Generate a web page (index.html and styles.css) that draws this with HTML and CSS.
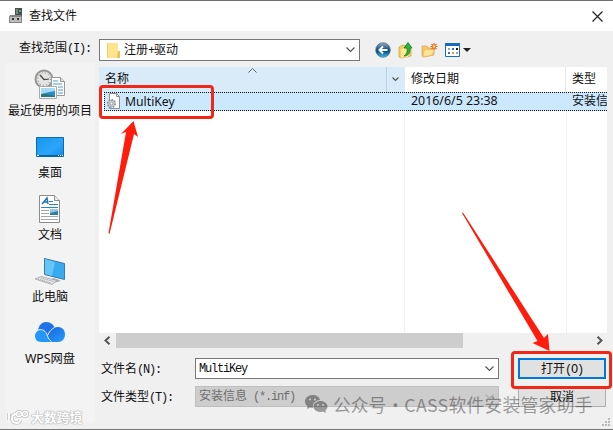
FILE: index.html
```html
<!DOCTYPE html>
<html lang="zh-CN">
<head>
    <meta charset="UTF-8">
    <title>查找文件</title>
    <link rel="stylesheet" href="styles.css">
</head>
<body>
<div class="dialog">
    <div class="titlebar">
        <svg class="app-icon" width="14" height="16" viewBox="0 0 14 16">
            <path d="M6 0h7v9H6z" fill="#46504f"/>
            <path d="M7 1h2v5H7z" fill="#738482"/>
            <path d="M10 2h2v2h-2z" fill="#35bd54"/>
            <path d="M1 7h11l1 2v6H0V9z" fill="#858585"/>
            <path d="M1 9h11v5H1z" fill="#bdbdbd"/>
            <path d="M3 10h2v2H3zM8 10h2v2H8z" fill="#333"/>
        </svg>
        <span class="title">查找文件</span>
        <svg class="close" width="11" height="11" viewBox="0 0 11 11"><path d="M.5.5l10 10M10.5.5l-10 10" stroke="#222" stroke-width="1.2"/></svg>
    </div>
    <div class="body">
        <div class="left">
            <div class="look-label">查找范围<span class="mono">(I):</span></div>
            <div class="places">
                <div class="place">
                    <svg width="32" height="32" viewBox="0 0 32 32">
                        <circle cx="10" cy="10" r="8.5" fill="#e4e4e2" stroke="#969696" stroke-width="2"/>
                        <circle cx="10" cy="10" r="6.3" fill="none" stroke="#777" stroke-dasharray="1 2.3"/>
                        <path d="M6 6l4 4.5 5-.5" fill="none" stroke="#444" stroke-width="1.2"/>
                        <path d="M17.5 8.5h9l4 4v14h-13z" fill="#fff" stroke="#999"/>
                        <path d="M26.5 8.5v4h4" fill="#ddd" stroke="#999"/>
                        <path d="M19 12h5M19 15h9M24 18h5M24 21h5M24 24h5" stroke="#4b9bd0"/>
                        <path d="M5.5 17.5h17v12h-17z" fill="#fff" stroke="#aaa"/>
                        <path d="M7 19h14v9H7z" fill="#2889cd"/>
                        <path d="M7 19h14v3q-6 1-14 3z" fill="#a5dcf4"/>
                        <path d="M7 25q7 0 14 2v1H7z" fill="#277b68"/>
                    </svg>
                    <span>最近使用的项目</span>
                </div>
                <div class="place">
                    <svg width="32" height="32" viewBox="0 0 32 32">
                        <defs><linearGradient id="desk" x2="1" y2="1"><stop offset="0" stop-color="#1696ec"/><stop offset=".6" stop-color="#2ba5fa"/><stop offset="1" stop-color="#118eea"/></linearGradient></defs>
                        <path d="M2.5 6.5h27v19h-27z" fill="url(#desk)" stroke="#0a6bad"/>
                        <path d="M3 24h26v1.5H3z" fill="#08609f"/>
                        <path d="M3 24.5h2M24 24.5h1M26 24.5h1M28 24.5h1" stroke="#fff"/>
                    </svg>
                    <span>桌面</span>
                </div>
                <div class="place">
                    <svg width="32" height="32" viewBox="0 0 32 32">
                        <path d="M5.500 2.500h15l5 5v22h-20z" fill="#fff" stroke="#8c8c8c"/>
                        <path d="M20.500 2.500v5h5" fill="#eee" stroke="#8c8c8c"/>
                        <path d="M8 11l5-6 1 6M10 9h4" fill="none" stroke="#1c78b4" stroke-width="1.5"/>
                        <path d="M15 8.500h4M15 11.500h9M7 14.500h17" stroke="#2c86c0"/>
                        <path d="M7 17.500h8M7 20.500h8M7 23.500h17M7 26.500h17" stroke="#a0a6aa"/>
                        <path d="M16 16h8v6h-8z" fill="#2d7fa9"/>
                        <path d="M16 16h8v2l-8 2z" fill="#91cbe8"/>
                    </svg>
                    <span>文档</span>
                </div>
                <div class="place">
                    <svg width="32" height="32" viewBox="0 0 32 32">
                        <path d="M10.500 3.500l20 5v16l-20-5z" fill="#38aaf0" stroke="#397ca6"/>
                        <path d="M11 4l10 3-3 14-7-2z" fill="#66c4f9"/>
                        <path d="M19 23l5 1.500 3 1.500-6 1.500-4-2z" fill="#a7adb1"/>
                        <path d="M1 24l6-2.500 16 4-5 4z" fill="#e5e5e5" stroke="#a4a4a4" stroke-width=".8"/>
                        <path d="M4 24l13 4M7 23l13 3.500" stroke="#999" stroke-dasharray="1 1"/>
                    </svg>
                    <span>此电脑</span>
                </div>
                <div class="place">
                    <svg width="32" height="32" viewBox="0 0 32 32">
                        <defs><linearGradient id="cloud" x2="1" y2="1"><stop offset="0" stop-color="#1762df"/><stop offset="1" stop-color="#269eff"/></linearGradient></defs>
                        <path d="M4 13C5 8 8 5 12 5c5 0 8 3 9 7l-7 8z" fill="#1f72ea"/>
                        <path d="M12 25c2-7 6-15 12-15 4 0 7 3 7 7.500 0 4.500-3 7.500-7 7.500z" fill="url(#cloud)"/>
                        <path d="M17 25H7c-4 0-6-3-6-6s2.500-6.500 6.500-6.500C13 12.500 12 22 17 25z" fill="#2497fc"/>
                        <path d="M2 14.500c2-2 6-3 9 0s2 7 6.500 10M13.500 18.500c2-4 4-6.500 7-8" fill="none" stroke="#f3f3f3"/>
                    </svg>
                    <span class="wps">WPS网盘</span>
                </div>
            </div>
        </div>
        <div class="right">
            <div class="toolbar">
                <div class="combo">
                    <svg width="14" height="17" viewBox="0 0 14 17"><path d="M0 1h11v15H0z" fill="#ffe38d"/><path d="M11 9h2v7h-3z" fill="#e7c15b"/><path d="M0 1h1v15H0z" fill="#f2ce6d"/></svg>
                    <span>注册<span class="mono">+</span>驱动</span>
                    <svg class="chevron" width="9" height="6" viewBox="0 0 9 6"><path d="M.5.5l4 4 4-4"/></svg>
                </div>
                <svg class="back" width="16" height="16" viewBox="0 0 16 16">
                    <defs><linearGradient id="orb" x2="0" y2="1"><stop offset="0" stop-color="#9ba9b5"/><stop offset=".45" stop-color="#195889"/><stop offset=".6" stop-color="#08517f"/><stop offset="1" stop-color="#42c2ec"/></linearGradient></defs>
                    <circle cx="8" cy="8" r="7.3" fill="url(#orb)" stroke="#466d8e" stroke-width=".7"/>
                    <path d="M12.500 8H4.500M8 4.500L4.500 8 8 11.500" fill="none" stroke="#fff" stroke-width="2"/>
                </svg>
                <svg class="up" width="16" height="17" viewBox="0 0 16 17">
                    <path d="M1 5l4-2 2 1 6 1v9l-9 2-3-1z" fill="#f4cf62" stroke="#cba03d" stroke-width=".7"/>
                    <path d="M3 7l9-1-2 9-7 1z" fill="#ffe79a"/>
                    <path d="M6 14c3-2 3.500-5 3-8H6l4-5.500L14 6h-2c.5 5-2 8-6 8z" fill="#2fb534" stroke="#13791f" stroke-width=".8"/>
                </svg>
                <svg class="new" width="17" height="16" viewBox="0 0 17 16">
                    <path d="M1 4h5l1 2h6v7l-10 2-2-1z" fill="#f5c95f" stroke="#d5a44c" stroke-width=".7"/>
                    <path d="M3 8l11-1-3 6-9 2z" fill="#ffe59b" stroke="#dfb35d" stroke-width=".6"/>
                    <path d="M13 1v7M9.500 4.500h7M10.500 2l5 5M15.500 2l-5 5" stroke="#ed6a30" stroke-width="1.2"/>
                    <circle cx="13" cy="4.500" r="1.2" fill="#ffe261"/>
                </svg>
                <svg class="views" width="27" height="15" viewBox="0 0 27 15">
                    <path d="M.5.5h14v13H.5z" fill="#fff" stroke="#176bc1"/>
                    <path d="M0 0h15v3H0z" fill="#176bc1"/>
                    <path d="M3 5h2v2H3zM11 9h2v2h-2z" fill="#89a7c0"/>
                    <path d="M7 5h2v2H7zM3 9h2v2H3z" fill="#3274b5"/>
                    <path d="M11 5h2v2h-2z" fill="#222"/><path d="M7 9h2v2H7z" fill="#d4904f"/>
                    <path d="M18 5h8l-4 4z" fill="#222"/>
                </svg>
            </div>
            <div class="list">
                <div class="head">
                    <div class="name-col">名称
                        <svg class="sort" width="9" height="5" viewBox="0 0 9 5"><path d="M.5 4.500l4-4 4 4"/></svg>
                    </div>
                    <div class="drop"><svg class="chevron" width="7" height="5" viewBox="0 0 7 5"><path d="M.5.5l3 3 3-3"/></svg></div>
                    <div class="date-col">修改日期</div>
                    <div class="type-col">类型</div>
                </div>
                <div class="row">
                    <div class="file">
                        <svg width="15" height="17" viewBox="0 0 15 17">
                            <path d="M3.500.5h7l3 3v12h-10z" fill="#fff" stroke="#909090"/>
                            <path d="M10.500.5v3h3" fill="none" stroke="#909090"/>
                            <circle cx="5.500" cy="10.500" r="3.800" fill="#c6cbd0" stroke="#858c92" stroke-width="1.5" stroke-dasharray="1.700 1.200"/>
                            <circle cx="5.500" cy="10.500" r="1.400" fill="#fff" stroke="#858c92" stroke-width=".7"/>
                        </svg>
                        <span>MultiKey</span>
                    </div>
                    <div class="date-col">2016/6/5 23:38</div>
                    <div class="type-col">安装信息</div>
                </div>
                <div class="blank"><i></i><i></i><i></i></div>
            </div>
            <div class="scrollbar">
                <svg width="7" height="9" viewBox="0 0 7 9"><path d="M5.500.8l-4 3.700 4 3.700"/></svg>
                <div class="track"><div class="thumb"></div></div>
                <svg width="7" height="9" viewBox="0 0 7 9"><path d="M1.500.8l4 3.700-4 3.700"/></svg>
            </div>
            <div class="form">
                <label>文件名<span class="mono">(N):</span></label>
                <div class="field"><span class="mono">MultiKey</span><svg class="chevron" width="9" height="6" viewBox="0 0 9 6"><path d="M.5.5l4 4 4-4"/></svg></div>
                <div class="button primary">打开<span class="mono">(O)</span></div>
                <label>文件类型<span class="mono">(T):</span></label>
                <div class="field disabled"><span>安装信息<span class="mono"> (*.inf)</span></span><svg class="chevron" width="9" height="6" viewBox="0 0 9 6"><path d="M.5.5l4 4 4-4"/></svg></div>
                <div class="button">取消</div>
            </div>
        </div>
    </div>
    <svg class="grip" width="9" height="9" viewBox="0 0 9 9"><path d="M6 0h2v2H6zM3 3h2v2H3zM6 3h2v2H6zM0 6h2v2H0zM3 6h2v2H3zM6 6h2v2H6z" fill="#b9b9b9"/></svg>

    <div class="account">
        <svg width="24" height="20" viewBox="0 0 24 20">
            <path fill-rule="evenodd" d="M8.500 1C4 1 1 4 1 7.500c0 2 1 3.500 2.500 4.800L3 15l3-1.500 3 .5C8 9 12 6 16 6c-.6-3-3.500-5-7.500-5zM5 5.500a1 1 0 1 0 2 0a1 1 0 1 0-2 0M10 5.500a1 1 0 1 0 2 0a1 1 0 1 0-2 0"/>
            <path fill-rule="evenodd" d="M16.500 7C12.500 7 9.500 9.500 9.500 12.500s3 5.500 7 5.500l2.500-.4L22 19l-.7-2.400c1.300-1 2.200-2.400 2.200-4.100 0-3-3-5.500-7-5.500zM13 11a1 1 0 1 0 2 0a1 1 0 1 0-2 0M18 11a1 1 0 1 0 2 0a1 1 0 1 0-2 0"/>
        </svg>
        <span class="account-label">公众号</span><span class="dot">·</span><span class="account-name">CASS软件安装管家助手</span>
    </div>
    <div class="brand">
        <svg width="24" height="15" viewBox="0 0 24 15">
            <path d="M2 3v7M10 4Q5 4 5 8.500T9.500 13q3 0 4-3" stroke="#c4c4c4" stroke-width="3.5"/>
            <circle cx="12" cy="4" r="2.500" stroke="#c4c4c4" stroke-width="3"/>
            <circle cx="18" cy="4" r="2.500" stroke="#c4c4c4" stroke-width="3"/>
            <path d="M2 3v7M10 4Q5 4 5 8.500T9.500 13q3 0 4-3" stroke="#fff" stroke-width="1.8"/>
            <circle cx="12" cy="4" r="2.500" stroke="#fff" stroke-width="1.3"/>
            <circle cx="18" cy="4" r="2.500" stroke="#fff" stroke-width="1.3"/>
        </svg>
        <span>大数跨境</span>
    </div>
    <div class="file-frame"></div>
    <div class="open-frame"></div>
    <svg class="arrows" width="613" height="430" viewBox="0 0 613 430">
        <path d="M133.500 121l4.500 16-4-3L109.500 234l-1-1L126 132l-5 2z"/>
        <path d="M462 213l1-.5L544 338l4-4 1.500 17-17-8 5-2z"/>
    </svg>
</div>
</body>
</html>
```
FILE: styles.css
```css
* {
    box-sizing: border-box;
}

body {
    margin: 0;
    font-family: "Noto Sans", "Noto Sans CJK SC", sans-serif;
    font-size: 12px;
    line-height: 16px;
    color: #111;
}

svg {
    display: block;
    flex: none;
}

.mono {
    font-family: "Liberation Mono", monospace;
    font-size: 12px;
    letter-spacing: -1.2px;
    white-space: pre;
}

.dialog {
    position: relative;
    width: 613px;
    height: 430px;
    overflow: hidden;
    background: #f0f0f0;
    border-top: 1px solid #706e71;
    border-bottom: 1px solid #777;
}

.titlebar {
    display: flex;
    align-items: center;
    height: 30px;
    padding: 0 10px 0 9px;
    background: #fff;
}

.title {
    margin-left: 6px;
}

.close {
    margin-left: auto;
}

.body {
    display: grid;
    grid-template-columns: 99px 1fr;
}

.look-label {
    height: 32px;
    padding: 9px 0 0 19px;
    white-space: nowrap;
}

.places {
    height: 360px;
    margin: 0 4px 0 6px;
    background: #f3f3f3;
}

.place {
    display: flex;
    flex-direction: column;
    align-items: center;
    height: 62px;
    padding: 6px 1px 0 0;
    gap: 2px;
    white-space: nowrap;
}

.wps {
    font-size: 12.3px;
}

.toolbar {
    display: flex;
    height: 36px;
    padding-top: 8px;
}

.combo {
    display: flex;
    align-items: center;
    width: 261px;
    height: 22px;
    padding: 0 4px 0 7px;
    gap: 3px;
    background: #fff;
    border: 1px solid #777;
}

.chevron {
    margin-left: auto;
    fill: none;
    stroke: #555;
    stroke-width: 1.2;
}

.back {
    margin: 3px 0 0 15px;
}

.up {
    margin: 3px 0 0 7px;
}

.new {
    margin: 3px 0 0 7px;
}

.views {
    margin: 4px 0 0 7px;
}

.list {
    display: flex;
    flex-direction: column;
    width: 508px;
    height: 266px;
    overflow: hidden;
    background: #fff;
}

.head {
    display: grid;
    grid-template-columns: 288px 18px 161px 41px;
    height: 25px;
    line-height: 24px;
}

.name-col {
    display: flex;
    padding-left: 6px;
    background: #d9ebf9;
    border-right: 1px solid #b9d3e7;
}

.sort {
    margin: 1px 0 0 119px;
    fill: none;
    stroke: #666;
}

.drop {
    display: flex;
    align-items: center;
    padding: 0 6px 0 5px;
    background: #d9ebf9;
}

.date-col,
.type-col {
    padding-left: 6px;
    white-space: nowrap;
    overflow: hidden;
}

.head .date-col {
    border-right: 1px solid #deebf4;
}

.row {
    display: grid;
    grid-template-columns: 301px 161px 41px;
    height: 19px;
    margin-left: 5px;
    line-height: 16px;
    background: #cce8ff;
    border: 1px dotted #111;
    border-right: none;
}

.file {
    display: flex;
    align-items: center;
    padding-left: 1px;
    gap: 4px;
    font-size: 12.2px;
}

.row .date-col {
    padding-left: 5px;
    font-size: 12.4px;
}

.row .type-col {
    padding-left: 5px;
}

.blank {
    flex: 1;
    display: grid;
    grid-template-columns: 306px 162px 40px;
}

.blank i {
    border-right: 1px solid #edf3f8;
}

.blank i:last-child {
    border: none;
}

.scrollbar {
    display: flex;
    align-items: center;
    width: 508px;
    height: 15px;
    padding: 0 4px 0 5px;
}

.scrollbar > svg {
    fill: none;
    stroke: #555;
    stroke-width: 2;
}

.track {
    flex: 1;
    height: 15px;
    padding-left: 5px;
}

.thumb {
    width: 347px;
    height: 15px;
    background: #cdcdcd;
}

.form {
    display: grid;
    grid-template-columns: 96px 304px 107px;
    grid-template-rows: 21px 21px;
    row-gap: 7px;
    padding-top: 10px;
}

.form label {
    padding: 3px 0 0 2px;
    white-space: nowrap;
}

.field {
    display: flex;
    align-items: center;
    padding: 0 4px 0 3px;
    background: #fff;
    border: 1px solid #777;
}

.disabled {
    color: #6d6d6d;
    background: #cdcdcd;
    border-color: #bfbfbf;
}

.disabled .chevron {
    stroke: #aaa;
}

.button {
    width: 88px;
    margin-left: 19px;
    line-height: 19px;
    text-align: center;
    background: #e1e1e1;
    border: 1px solid #adadad;
}

.primary {
    line-height: 17px;
    border: 2px solid #0078d7;
}

.grip {
    position: absolute;
    right: 2px;
    bottom: 2px;
}

.account {
    position: absolute;
    left: 304px;
    top: 392px;
    display: flex;
    align-items: center;
    height: 22px;
    font-family: "Noto Sans CJK SC", sans-serif;
    font-size: 17.8px;
    line-height: 22px;
    white-space: nowrap;
    color: #000;
    fill: #000;
    opacity: 0.36;
}

.account-label {
    margin-left: 5px;
}

.dot {
    width: 18px;
    text-align: center;
}

.account-name {
    letter-spacing: 0.25px;
}

.brand {
    position: absolute;
    left: 7px;
    top: 408px;
    display: flex;
    align-items: center;
    font-family: "Noto Sans CJK SC", sans-serif;
    font-size: 12.8px;
    font-weight: bold;
    color: #fff;
    white-space: nowrap;
    text-shadow: 0 0 1px #aaa, 0 0 1px #aaa, 0 0 2px #bbb;
}

.brand svg {
    fill: none;
}

.file-frame,
.open-frame {
    position: absolute;
    border: 3px solid #f02818;
    border-radius: 4px;
}

.file-frame {
    left: 99px;
    top: 84px;
    width: 115px;
    height: 34px;
}

.open-frame {
    left: 511px;
    top: 350px;
    width: 101px;
    height: 38px;
}

.arrows {
    position: absolute;
    left: 0;
    top: -1px;
    fill: #ff1c0d;
}
```
